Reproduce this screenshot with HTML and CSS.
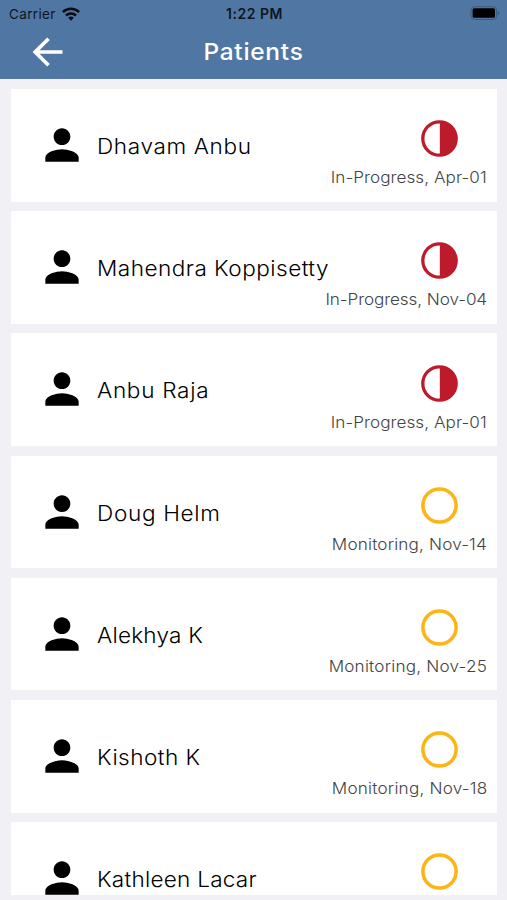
FILE: index.html
```html
<!DOCTYPE html>
<html lang="en">
<head>
<meta charset="utf-8">
<title>Patients</title>
<link rel="stylesheet" href="styles.css">
</head>
<body>
<svg width="0" height="0" class="defs" aria-hidden="true">
  <symbol id="person" viewBox="0 0 24 24"><path d="M12 12c2.21 0 4-1.79 4-4s-1.79-4-4-4-4 1.79-4 4 1.79 4 4 4zm0 2c-2.67 0-8 1.34-8 4v2h16v-2c0-2.66-5.33-4-8-4z"/></symbol>
  <symbol id="half" viewBox="0 0 37 37"><circle cx="18.5" cy="18.5" r="16.7" fill="none" stroke="#bd1b2c" stroke-width="3.3"/><path d="M18.8 1.5a17 17 0 0 1 0 34z" fill="#bd1b2c"/></symbol>
  <symbol id="ring" viewBox="0 0 37 37"><circle cx="18.5" cy="18.5" r="16.6" fill="none" stroke="#fdb515" stroke-width="3.5"/></symbol>
</svg>
<div class="screen">
  <header class="header">
    <div class="status-bar">
      <div class="carrier"><span>Carrier</span>
        <svg class="wifi" viewBox="0 0 18 14" width="18" height="14"><g fill="none" stroke="#080b10" stroke-width="2.5"><path d="M.9 5.2a11.5 11.5 0 0 1 16.2 0"/><path d="M4 8.5a7.1 7.1 0 0 1 10 0"/></g><path d="M6.2 10.8a4 4 0 0 1 5.6 0L9 13.7z" fill="#080b10"/></svg>
      </div>
      <div class="time">1:22 PM</div>
      <div class="power"><svg viewBox="0 0 30 15" width="30" height="15"><rect x="1" y=".7" width="25.6" height="12.8" rx="3.5" fill="none" stroke="#3c5a7d" stroke-width="1"/><rect x="2.6" y="2.3" width="22.4" height="9.4" rx="1.5" fill="#000"/><path d="M27.7 5v4.4c2-.7 2-3.7 0-4.4z" fill="#3c5a7d"/></svg></div>
    </div>
    <div class="title-bar">
      <svg class="back" viewBox="0 0 32 32" width="32" height="32"><path d="M16.5 2.8 3.2 16l13.3 13.2M3.5 16h27" fill="none" stroke="#fff" stroke-width="3.7"/></svg>
      <h1>Patients</h1>
    </div>
  </header>
  <main class="list">
    <article class="card"><svg class="person"><use href="#person"/></svg><span class="name n1">Dhavam Anbu</span><div class="state"><svg class="mark"><use href="#half"/></svg><span class="note s1">In-Progress, Apr-01</span></div></article>
    <article class="card"><svg class="person"><use href="#person"/></svg><span class="name n2">Mahendra Koppisetty</span><div class="state"><svg class="mark"><use href="#half"/></svg><span class="note s2">In-Progress, Nov-04</span></div></article>
    <article class="card"><svg class="person"><use href="#person"/></svg><span class="name n3">Anbu Raja</span><div class="state"><svg class="mark"><use href="#half"/></svg><span class="note s1">In-Progress, Apr-01</span></div></article>
    <article class="card"><svg class="person"><use href="#person"/></svg><span class="name n4">Doug Helm</span><div class="state"><svg class="mark"><use href="#ring"/></svg><span class="note s3">Monitoring, Nov-14</span></div></article>
    <article class="card"><svg class="person"><use href="#person"/></svg><span class="name n5">Alekhya K</span><div class="state"><svg class="mark"><use href="#ring"/></svg><span class="note s4">Monitoring, Nov-25</span></div></article>
    <article class="card"><svg class="person"><use href="#person"/></svg><span class="name n6">Kishoth K</span><div class="state"><svg class="mark"><use href="#ring"/></svg><span class="note s4">Monitoring, Nov-18</span></div></article>
    <article class="card"><svg class="person"><use href="#person"/></svg><span class="name n7">Kathleen Lacar</span><div class="state"><svg class="mark"><use href="#ring"/></svg></div></article>
  </main>
</div>
</body>
</html>
```
FILE: styles.css
```css
* { box-sizing: border-box; }
body { margin: 0; background: #f1f0f5; font-family: Inter, "Liberation Sans", sans-serif; }
svg { display: block; flex: none; }
.defs { position: absolute; }
.screen { width: 507px; height: 900px; overflow: hidden; display: flex; flex-direction: column; }
.header { height: 79px; flex: none; background: #5077a3; }
.status-bar { height: 27px; padding: 0 7px 0 9px; display: grid; grid-template-columns: 1fr auto 1fr; align-items: center; font-size: 13.5px; color: #10151c; }
.carrier { display: flex; align-items: center; gap: 6px; letter-spacing: .35px; }
.time { font-weight: 600; font-size: 14px; letter-spacing: .5px; }
.power { display: flex; justify-content: flex-end; }
.title-bar { height: 50px; padding: 0 32px; display: grid; grid-template-columns: 32px 1fr 32px; align-items: center; }
h1 { margin: 0; font-size: 23.5px; line-height: 28px; font-weight: 500; text-align: center; color: #fff; letter-spacing: .7px; transform: scaleX(1.04); }
.list { height: 816px; flex: none; padding: 10.1px 10px 0 11px; overflow: hidden; display: flex; flex-direction: column; gap: 9.4px; }
.card { height: 112.75px; flex: none; background: #fff; display: flex; align-items: center; padding: 0 10px 0 26px; }
.person { width: 50px; height: 50px; margin-top: -.6px; }
.name { margin: 1.4px 0 0 9.6px; font-size: 21.5px; line-height: 28px; font-weight: 350; color: #000; white-space: nowrap; transform: scaleX(1.05); transform-origin: left center; }
.n1 { letter-spacing: .6px; }
.n2 { letter-spacing: .45px; }
.n3 { letter-spacing: .66px; }
.n4 { letter-spacing: .64px; }
.n5 { letter-spacing: .2px; }
.n6 { letter-spacing: .42px; }
.n7 { letter-spacing: .22px; }
.state { margin-left: auto; width: 0; align-self: stretch; padding-top: 31.2px; display: flex; flex-direction: column; align-items: flex-end; }
.mark { width: 37px; height: 37px; margin-right: 29px; }
.note { margin-top: 10px; font-size: 16px; line-height: 20px; font-weight: 300; color: #444; white-space: nowrap; transform: scaleX(1.07); transform-origin: right center; }
.s1 { letter-spacing: .05px; }
.s2 { letter-spacing: -.08px; }
.s3 { letter-spacing: .16px; }
.s4 { letter-spacing: .2px; }
```
